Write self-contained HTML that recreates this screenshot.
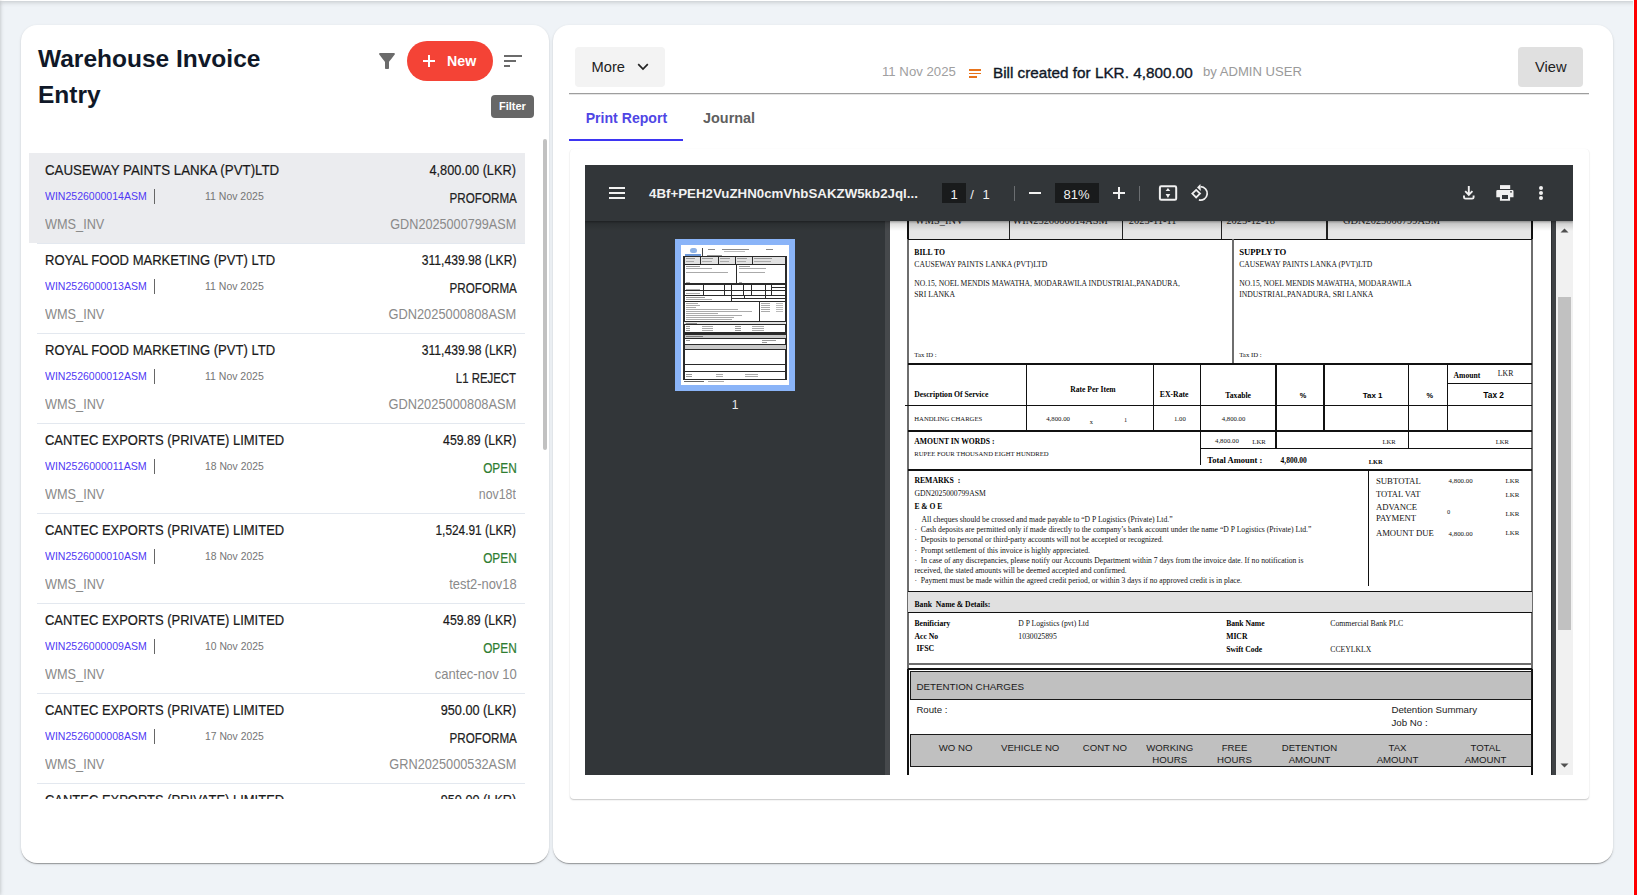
<!DOCTYPE html><html><head><meta charset="utf-8"><title>Warehouse Invoice Entry</title>
<style>
html,body{margin:0;padding:0;}
body{width:1637px;height:895px;overflow:hidden;position:relative;background:#eff3f7;font-family:'Liberation Sans',sans-serif;}
.t{position:absolute;white-space:pre;line-height:1;}
.r{position:absolute;}
.card{position:absolute;background:#fff;border-radius:16px;box-shadow:0 2px 1px -1px rgba(0,0,0,.2),0 1px 1px 0 rgba(0,0,0,.14),0 1px 3px 0 rgba(0,0,0,.12);}
.clip{position:absolute;overflow:hidden;}
svg{position:absolute;display:block;}
</style></head><body>

<div class="r" style="left:0;top:-40px;width:1637px;height:41px;background:#fff;box-shadow:0 1px 5px rgba(0,0,0,.2);"></div>
<div class="r" style="left:-40px;top:0;width:40px;height:895px;background:#fff;box-shadow:0 0 4px rgba(0,0,0,.25);"></div>
<div class="card" style="left:21px;top:25px;width:528px;height:838px;"></div>
<div class="t" style="top:47.46px;font-size:24.5px;color:#101828;font-weight:700;font-family:'Liberation Sans', sans-serif;left:38px;">Warehouse Invoice</div>
<div class="t" style="top:83.16px;font-size:24.5px;color:#101828;font-weight:700;font-family:'Liberation Sans', sans-serif;left:38px;">Entry</div>
<svg style="left:375px;top:49px" width="24" height="24" viewBox="0 0 24 24"><path d="M4.25 5.61C6.27 8.2 10 13 10 13v6c0 .55.45 1 1 1h2c.55 0 1-.45 1-1v-6s3.72-4.8 5.74-7.39c.51-.66.04-1.61-.79-1.61H5.04c-.83 0-1.3.95-.79 1.61z" fill="#6b6b6b"/></svg>
<div class="r" style="left:407px;top:41px;width:86px;height:40px;border-radius:20px;background:#f44336;"></div>
<div class="r" style="left:423px;top:60px;width:12px;height:2px;background:#fff;"></div>
<div class="r" style="left:428px;top:55px;width:2px;height:12px;background:#fff;"></div>
<div class="t" style="top:53.98px;font-size:14.2px;color:#fff;font-weight:700;font-family:'Liberation Sans', sans-serif;left:447px;">New</div>
<div class="r" style="left:504px;top:55px;width:18px;height:2px;background:#6b6b6b;"></div>
<div class="r" style="left:504px;top:60px;width:12px;height:2px;background:#6b6b6b;"></div>
<div class="r" style="left:504px;top:65px;width:6px;height:2px;background:#6b6b6b;"></div>
<div class="r" style="left:491px;top:95px;width:43px;height:23px;border-radius:4px;background:#676767;"></div>
<div class="t" style="top:101.09px;font-size:11px;color:#fff;font-weight:700;font-family:'Liberation Sans', sans-serif;left:499px;">Filter</div>
<div class="clip" style="left:0;top:0;width:1637px;height:799px;">
<div class="r" style="left:29px;top:153px;width:496px;height:90px;background:#ebecef;"></div>
<div class="r" style="left:37px;top:242.5px;width:488px;height:1px;background:#e3e8ef;"></div>
<div class="t" style="top:163.20px;font-size:14.3px;color:#1a1a1a;font-weight:400;font-family:'Liberation Sans', sans-serif;left:45.3px;-webkit-text-stroke:0.2px #1a1a1a;transform:scaleX(0.9300);transform-origin:left top;">CAUSEWAY PAINTS LANKA (PVT)LTD</div>
<div class="t" style="top:162.75px;font-size:14px;color:#1a1a1a;font-weight:400;font-family:'Liberation Sans', sans-serif;right:1120.60px;text-align:right;-webkit-text-stroke:0.2px #1a1a1a;transform:scaleX(0.9114);transform-origin:right top;">4,800.00 (LKR)</div>
<div class="t" style="top:190.77px;font-size:10.9px;color:#5038f5;font-weight:400;font-family:'Liberation Sans', sans-serif;left:45.3px;transform:scaleX(0.9653);transform-origin:left top;">WIN2526000014ASM</div>
<div class="r" style="left:154px;top:189px;width:1px;height:15px;background:#666;"></div>
<div class="t" style="top:191.11px;font-size:10.5px;color:#757575;font-weight:400;font-family:'Liberation Sans', sans-serif;left:205px;transform:scaleX(0.9991);transform-origin:left top;">11 Nov 2025</div>
<div class="t" style="top:190.75px;font-size:14px;color:#222;font-weight:400;font-family:'Liberation Sans', sans-serif;right:1120.60px;text-align:right;-webkit-text-stroke:0.2px #222;transform:scaleX(0.8332);transform-origin:right top;">PROFORMA</div>
<div class="t" style="top:216.80px;font-size:14.3px;color:#8a8a8a;font-weight:400;font-family:'Liberation Sans', sans-serif;left:45.3px;transform:scaleX(0.8895);transform-origin:left top;">WMS_INV</div>
<div class="t" style="top:216.60px;font-size:14.3px;color:#8a8a8a;font-weight:400;font-family:'Liberation Sans', sans-serif;right:1120.60px;text-align:right;transform:scaleX(0.8859);transform-origin:right top;">GDN2025000799ASM</div>
<div class="r" style="left:37px;top:332.5px;width:488px;height:1px;background:#e3e8ef;"></div>
<div class="t" style="top:253.20px;font-size:14.3px;color:#1a1a1a;font-weight:400;font-family:'Liberation Sans', sans-serif;left:45.3px;-webkit-text-stroke:0.2px #1a1a1a;transform:scaleX(0.9117);transform-origin:left top;">ROYAL FOOD MARKETING (PVT) LTD</div>
<div class="t" style="top:252.75px;font-size:14px;color:#1a1a1a;font-weight:400;font-family:'Liberation Sans', sans-serif;right:1120.60px;text-align:right;-webkit-text-stroke:0.2px #1a1a1a;transform:scaleX(0.8651);transform-origin:right top;">311,439.98 (LKR)</div>
<div class="t" style="top:280.77px;font-size:10.9px;color:#5038f5;font-weight:400;font-family:'Liberation Sans', sans-serif;left:45.3px;transform:scaleX(0.9653);transform-origin:left top;">WIN2526000013ASM</div>
<div class="r" style="left:154px;top:279px;width:1px;height:15px;background:#666;"></div>
<div class="t" style="top:281.11px;font-size:10.5px;color:#757575;font-weight:400;font-family:'Liberation Sans', sans-serif;left:205px;transform:scaleX(0.9991);transform-origin:left top;">11 Nov 2025</div>
<div class="t" style="top:280.75px;font-size:14px;color:#222;font-weight:400;font-family:'Liberation Sans', sans-serif;right:1120.60px;text-align:right;-webkit-text-stroke:0.2px #222;transform:scaleX(0.8332);transform-origin:right top;">PROFORMA</div>
<div class="t" style="top:306.80px;font-size:14.3px;color:#8a8a8a;font-weight:400;font-family:'Liberation Sans', sans-serif;left:45.3px;transform:scaleX(0.8895);transform-origin:left top;">WMS_INV</div>
<div class="t" style="top:306.60px;font-size:14.3px;color:#8a8a8a;font-weight:400;font-family:'Liberation Sans', sans-serif;right:1120.60px;text-align:right;transform:scaleX(0.8987);transform-origin:right top;">GDN2025000808ASM</div>
<div class="r" style="left:37px;top:422.5px;width:488px;height:1px;background:#e3e8ef;"></div>
<div class="t" style="top:343.20px;font-size:14.3px;color:#1a1a1a;font-weight:400;font-family:'Liberation Sans', sans-serif;left:45.3px;-webkit-text-stroke:0.2px #1a1a1a;transform:scaleX(0.9117);transform-origin:left top;">ROYAL FOOD MARKETING (PVT) LTD</div>
<div class="t" style="top:342.75px;font-size:14px;color:#1a1a1a;font-weight:400;font-family:'Liberation Sans', sans-serif;right:1120.60px;text-align:right;-webkit-text-stroke:0.2px #1a1a1a;transform:scaleX(0.8651);transform-origin:right top;">311,439.98 (LKR)</div>
<div class="t" style="top:370.77px;font-size:10.9px;color:#5038f5;font-weight:400;font-family:'Liberation Sans', sans-serif;left:45.3px;transform:scaleX(0.9653);transform-origin:left top;">WIN2526000012ASM</div>
<div class="r" style="left:154px;top:369px;width:1px;height:15px;background:#666;"></div>
<div class="t" style="top:371.11px;font-size:10.5px;color:#757575;font-weight:400;font-family:'Liberation Sans', sans-serif;left:205px;transform:scaleX(0.9991);transform-origin:left top;">11 Nov 2025</div>
<div class="t" style="top:370.75px;font-size:14px;color:#222;font-weight:400;font-family:'Liberation Sans', sans-serif;right:1120.60px;text-align:right;-webkit-text-stroke:0.2px #222;transform:scaleX(0.8124);transform-origin:right top;">L1 REJECT</div>
<div class="t" style="top:396.80px;font-size:14.3px;color:#8a8a8a;font-weight:400;font-family:'Liberation Sans', sans-serif;left:45.3px;transform:scaleX(0.8895);transform-origin:left top;">WMS_INV</div>
<div class="t" style="top:396.60px;font-size:14.3px;color:#8a8a8a;font-weight:400;font-family:'Liberation Sans', sans-serif;right:1120.60px;text-align:right;transform:scaleX(0.8987);transform-origin:right top;">GDN2025000808ASM</div>
<div class="r" style="left:37px;top:512.5px;width:488px;height:1px;background:#e3e8ef;"></div>
<div class="t" style="top:433.20px;font-size:14.3px;color:#1a1a1a;font-weight:400;font-family:'Liberation Sans', sans-serif;left:45.3px;-webkit-text-stroke:0.2px #1a1a1a;transform:scaleX(0.9068);transform-origin:left top;">CANTEC EXPORTS (PRIVATE) LIMITED</div>
<div class="t" style="top:432.75px;font-size:14px;color:#1a1a1a;font-weight:400;font-family:'Liberation Sans', sans-serif;right:1120.60px;text-align:right;-webkit-text-stroke:0.2px #1a1a1a;transform:scaleX(0.8791);transform-origin:right top;">459.89 (LKR)</div>
<div class="t" style="top:460.77px;font-size:10.9px;color:#5038f5;font-weight:400;font-family:'Liberation Sans', sans-serif;left:45.3px;transform:scaleX(0.9728);transform-origin:left top;">WIN2526000011ASM</div>
<div class="r" style="left:154px;top:459px;width:1px;height:15px;background:#666;"></div>
<div class="t" style="top:461.11px;font-size:10.5px;color:#757575;font-weight:400;font-family:'Liberation Sans', sans-serif;left:205px;transform:scaleX(0.9858);transform-origin:left top;">18 Nov 2025</div>
<div class="t" style="top:460.75px;font-size:14px;color:#2e7d32;font-weight:400;font-family:'Liberation Sans', sans-serif;right:1120.60px;text-align:right;-webkit-text-stroke:0.2px #2e7d32;transform:scaleX(0.8450);transform-origin:right top;">OPEN</div>
<div class="t" style="top:486.80px;font-size:14.3px;color:#8a8a8a;font-weight:400;font-family:'Liberation Sans', sans-serif;left:45.3px;transform:scaleX(0.8895);transform-origin:left top;">WMS_INV</div>
<div class="t" style="top:486.60px;font-size:14.3px;color:#8a8a8a;font-weight:400;font-family:'Liberation Sans', sans-serif;right:1120.60px;text-align:right;transform:scaleX(0.8644);transform-origin:right top;">nov18t</div>
<div class="r" style="left:37px;top:602.5px;width:488px;height:1px;background:#e3e8ef;"></div>
<div class="t" style="top:523.20px;font-size:14.3px;color:#1a1a1a;font-weight:400;font-family:'Liberation Sans', sans-serif;left:45.3px;-webkit-text-stroke:0.2px #1a1a1a;transform:scaleX(0.9068);transform-origin:left top;">CANTEC EXPORTS (PRIVATE) LIMITED</div>
<div class="t" style="top:522.75px;font-size:14px;color:#1a1a1a;font-weight:400;font-family:'Liberation Sans', sans-serif;right:1120.60px;text-align:right;-webkit-text-stroke:0.2px #1a1a1a;transform:scaleX(0.8474);transform-origin:right top;">1,524.91 (LKR)</div>
<div class="t" style="top:550.77px;font-size:10.9px;color:#5038f5;font-weight:400;font-family:'Liberation Sans', sans-serif;left:45.3px;transform:scaleX(0.9653);transform-origin:left top;">WIN2526000010ASM</div>
<div class="r" style="left:154px;top:549px;width:1px;height:15px;background:#666;"></div>
<div class="t" style="top:551.11px;font-size:10.5px;color:#757575;font-weight:400;font-family:'Liberation Sans', sans-serif;left:205px;transform:scaleX(0.9858);transform-origin:left top;">18 Nov 2025</div>
<div class="t" style="top:550.75px;font-size:14px;color:#2e7d32;font-weight:400;font-family:'Liberation Sans', sans-serif;right:1120.60px;text-align:right;-webkit-text-stroke:0.2px #2e7d32;transform:scaleX(0.8450);transform-origin:right top;">OPEN</div>
<div class="t" style="top:576.80px;font-size:14.3px;color:#8a8a8a;font-weight:400;font-family:'Liberation Sans', sans-serif;left:45.3px;transform:scaleX(0.8895);transform-origin:left top;">WMS_INV</div>
<div class="t" style="top:576.60px;font-size:14.3px;color:#8a8a8a;font-weight:400;font-family:'Liberation Sans', sans-serif;right:1120.60px;text-align:right;transform:scaleX(0.9046);transform-origin:right top;">test2-nov18</div>
<div class="r" style="left:37px;top:692.5px;width:488px;height:1px;background:#e3e8ef;"></div>
<div class="t" style="top:613.20px;font-size:14.3px;color:#1a1a1a;font-weight:400;font-family:'Liberation Sans', sans-serif;left:45.3px;-webkit-text-stroke:0.2px #1a1a1a;transform:scaleX(0.9068);transform-origin:left top;">CANTEC EXPORTS (PRIVATE) LIMITED</div>
<div class="t" style="top:612.75px;font-size:14px;color:#1a1a1a;font-weight:400;font-family:'Liberation Sans', sans-serif;right:1120.60px;text-align:right;-webkit-text-stroke:0.2px #1a1a1a;transform:scaleX(0.8791);transform-origin:right top;">459.89 (LKR)</div>
<div class="t" style="top:640.77px;font-size:10.9px;color:#5038f5;font-weight:400;font-family:'Liberation Sans', sans-serif;left:45.3px;transform:scaleX(0.9653);transform-origin:left top;">WIN2526000009ASM</div>
<div class="r" style="left:154px;top:639px;width:1px;height:15px;background:#666;"></div>
<div class="t" style="top:641.11px;font-size:10.5px;color:#757575;font-weight:400;font-family:'Liberation Sans', sans-serif;left:205px;transform:scaleX(0.9858);transform-origin:left top;">10 Nov 2025</div>
<div class="t" style="top:640.75px;font-size:14px;color:#2e7d32;font-weight:400;font-family:'Liberation Sans', sans-serif;right:1120.60px;text-align:right;-webkit-text-stroke:0.2px #2e7d32;transform:scaleX(0.8450);transform-origin:right top;">OPEN</div>
<div class="t" style="top:666.80px;font-size:14.3px;color:#8a8a8a;font-weight:400;font-family:'Liberation Sans', sans-serif;left:45.3px;transform:scaleX(0.8895);transform-origin:left top;">WMS_INV</div>
<div class="t" style="top:666.60px;font-size:14.3px;color:#8a8a8a;font-weight:400;font-family:'Liberation Sans', sans-serif;right:1120.60px;text-align:right;transform:scaleX(0.9128);transform-origin:right top;">cantec-nov 10</div>
<div class="r" style="left:37px;top:782.5px;width:488px;height:1px;background:#e3e8ef;"></div>
<div class="t" style="top:703.20px;font-size:14.3px;color:#1a1a1a;font-weight:400;font-family:'Liberation Sans', sans-serif;left:45.3px;-webkit-text-stroke:0.2px #1a1a1a;transform:scaleX(0.9068);transform-origin:left top;">CANTEC EXPORTS (PRIVATE) LIMITED</div>
<div class="t" style="top:702.75px;font-size:14px;color:#1a1a1a;font-weight:400;font-family:'Liberation Sans', sans-serif;right:1120.60px;text-align:right;-webkit-text-stroke:0.2px #1a1a1a;transform:scaleX(0.9077);transform-origin:right top;">950.00 (LKR)</div>
<div class="t" style="top:730.77px;font-size:10.9px;color:#5038f5;font-weight:400;font-family:'Liberation Sans', sans-serif;left:45.3px;transform:scaleX(0.9653);transform-origin:left top;">WIN2526000008ASM</div>
<div class="r" style="left:154px;top:729px;width:1px;height:15px;background:#666;"></div>
<div class="t" style="top:731.11px;font-size:10.5px;color:#757575;font-weight:400;font-family:'Liberation Sans', sans-serif;left:205px;transform:scaleX(0.9858);transform-origin:left top;">17 Nov 2025</div>
<div class="t" style="top:730.75px;font-size:14px;color:#222;font-weight:400;font-family:'Liberation Sans', sans-serif;right:1120.60px;text-align:right;-webkit-text-stroke:0.2px #222;transform:scaleX(0.8332);transform-origin:right top;">PROFORMA</div>
<div class="t" style="top:756.80px;font-size:14.3px;color:#8a8a8a;font-weight:400;font-family:'Liberation Sans', sans-serif;left:45.3px;transform:scaleX(0.8895);transform-origin:left top;">WMS_INV</div>
<div class="t" style="top:756.60px;font-size:14.3px;color:#8a8a8a;font-weight:400;font-family:'Liberation Sans', sans-serif;right:1120.60px;text-align:right;transform:scaleX(0.8923);transform-origin:right top;">GRN2025000532ASM</div>
<div class="r" style="left:37px;top:872.5px;width:488px;height:1px;background:#e3e8ef;"></div>
<div class="t" style="top:793.20px;font-size:14.3px;color:#1a1a1a;font-weight:400;font-family:'Liberation Sans', sans-serif;left:45.3px;-webkit-text-stroke:0.2px #1a1a1a;transform:scaleX(0.9068);transform-origin:left top;">CANTEC EXPORTS (PRIVATE) LIMITED</div>
<div class="t" style="top:792.75px;font-size:14px;color:#1a1a1a;font-weight:400;font-family:'Liberation Sans', sans-serif;right:1120.60px;text-align:right;-webkit-text-stroke:0.2px #1a1a1a;transform:scaleX(0.9077);transform-origin:right top;">950.00 (LKR)</div>
<div class="t" style="top:820.77px;font-size:10.9px;color:#5038f5;font-weight:400;font-family:'Liberation Sans', sans-serif;left:45.3px;transform:scaleX(0.9653);transform-origin:left top;">WIN2526000007ASM</div>
<div class="r" style="left:154px;top:819px;width:1px;height:15px;background:#666;"></div>
<div class="t" style="top:821.11px;font-size:10.5px;color:#757575;font-weight:400;font-family:'Liberation Sans', sans-serif;left:205px;transform:scaleX(0.9858);transform-origin:left top;">17 Nov 2025</div>
<div class="t" style="top:820.75px;font-size:14px;color:#222;font-weight:400;font-family:'Liberation Sans', sans-serif;right:1120.60px;text-align:right;-webkit-text-stroke:0.2px #222;transform:scaleX(0.8332);transform-origin:right top;">PROFORMA</div>
<div class="t" style="top:846.80px;font-size:14.3px;color:#8a8a8a;font-weight:400;font-family:'Liberation Sans', sans-serif;left:45.3px;transform:scaleX(0.8895);transform-origin:left top;">WMS_INV</div>
<div class="t" style="top:846.60px;font-size:14.3px;color:#8a8a8a;font-weight:400;font-family:'Liberation Sans', sans-serif;right:1120.60px;text-align:right;transform:scaleX(0.8923);transform-origin:right top;">GRN2025000532ASM</div>
</div>
<div class="r" style="left:543px;top:139px;width:4px;height:311px;border-radius:2px;background:#c1c1c1;"></div>
<div class="card" style="left:553px;top:25px;width:1060px;height:838px;"></div>
<div class="r" style="left:575px;top:47px;width:90px;height:40px;border-radius:4px;background:#f3f3f3;"></div>
<div class="t" style="top:59.86px;font-size:14.7px;color:#222;font-weight:400;font-family:'Liberation Sans', sans-serif;left:591.5px;">More</div>
<svg style="left:637px;top:63px" width="12" height="8" viewBox="0 0 12 8"><path d="M1.2 1.2L6 6L10.8 1.2" fill="none" stroke="#222" stroke-width="1.7"/></svg>
<div class="t" style="top:64.83px;font-size:13.2px;color:#a0a0a0;font-weight:400;font-family:'Liberation Sans', sans-serif;left:882px;">11 Nov 2025</div>
<div class="r" style="left:969px;top:69px;width:12px;height:1.6px;background:#e8741c;"></div>
<div class="r" style="left:969px;top:72.5px;width:12px;height:1.6px;background:#e8741c;"></div>
<div class="r" style="left:969px;top:76px;width:8px;height:1.6px;background:#e8741c;"></div>
<div class="t" style="top:66.10px;font-size:14.3px;color:#101828;font-weight:400;font-family:'Liberation Sans', sans-serif;left:993.4px;-webkit-text-stroke:0.35px #101828;transform:scaleX(1.0689);transform-origin:left top;">Bill created for LKR. 4,800.00</div>
<div class="t" style="top:64.91px;font-size:13.1px;color:#9a9a9a;font-weight:400;font-family:'Liberation Sans', sans-serif;left:1203px;">by ADMIN USER</div>
<div class="r" style="left:1518px;top:47px;width:65px;height:40px;border-radius:4px;background:#e0e0e0;"></div>
<div class="t" style="top:59.86px;font-size:14.7px;color:#222;font-weight:400;font-family:'Liberation Sans', sans-serif;left:1535px;">View</div>
<div class="r" style="left:569px;top:93px;width:1020px;height:1px;background:#9e9e9e;"></div>
<div class="r" style="left:569px;top:94px;width:1020px;height:1px;background:#e6e6e6;"></div>
<div class="t" style="top:110.86px;font-size:14.1px;color:#4f46e5;font-weight:700;font-family:'Liberation Sans', sans-serif;left:585.7px;">Print Report</div>
<div class="t" style="top:110.56px;font-size:14.1px;color:#5f5f5f;font-weight:700;font-family:'Liberation Sans', sans-serif;left:703px;transform:scaleX(1.0235);transform-origin:left top;">Journal</div>
<div class="r" style="left:569px;top:139px;width:114px;height:2px;background:#3d35f2;"></div>
<div class="r" style="left:569.5px;top:148.5px;width:1019px;height:650px;background:#fff;border-radius:4px;box-shadow:0 1px 1.5px rgba(0,0,0,.22),0 0 1px rgba(0,0,0,.05);"></div>
<div class="clip" style="left:585px;top:165px;width:988px;height:610px;background:#323639;">
<div class="r" style="left:300px;top:56px;width:5px;height:554px;background:#46494c;"></div>
<div class="r" style="left:305px;top:56px;width:661px;height:554px;background:#fff;"></div>
<div class="r" style="left:966px;top:56px;width:5px;height:554px;background:#3f4245;"></div>
<div class="r" style="left:966px;top:56px;width:1px;height:554px;background:#2b2e31;"></div>
<div class="r" style="left:971px;top:56px;width:17px;height:554px;background:#f1f1f1;"></div>
<div class="r" style="left:973px;top:132px;width:13px;height:333px;background:#c1c1c1;"></div>
<svg style="left:975px;top:62px" width="9" height="6" viewBox="0 0 9 6"><path d="M0.5 5.5L4.5 1.5L8.5 5.5Z" fill="#505050"/></svg>
<svg style="left:975px;top:598px" width="9" height="6" viewBox="0 0 9 6"><path d="M0.5 0.5L4.5 4.5L8.5 0.5Z" fill="#505050"/></svg>
<div class="r" style="left:323px;top:56px;width:624px;height:18px;background:#e6e6e6;"></div>
<div class="t" style="top:51.29px;font-size:10.4px;color:#222;font-weight:400;font-family:'Liberation Serif', serif;left:330px;">WMS_INV</div>
<div class="t" style="top:51.29px;font-size:10.4px;color:#222;font-weight:400;font-family:'Liberation Serif', serif;left:427.5px;">WIN2526000014ASM</div>
<div class="t" style="top:51.29px;font-size:10.4px;color:#222;font-weight:400;font-family:'Liberation Serif', serif;left:543.8px;">2025-11-11</div>
<div class="t" style="top:51.29px;font-size:10.4px;color:#222;font-weight:400;font-family:'Liberation Serif', serif;left:641.4000000000001px;">2025-12-18</div>
<div class="t" style="top:51.29px;font-size:10.4px;color:#222;font-weight:400;font-family:'Liberation Serif', serif;left:758px;">GDN2025000799ASM</div>
<div class="r" style="left:423.7px;top:56px;width:1.6px;height:18px;background:#222;"></div>
<div class="r" style="left:536.5px;top:56px;width:1.6px;height:18px;background:#222;"></div>
<div class="r" style="left:635.7px;top:56px;width:1.6px;height:18px;background:#222;"></div>
<div class="r" style="left:741.2px;top:56px;width:1.6px;height:18px;background:#222;"></div>
<div class="r" style="left:322.1px;top:56px;width:1.8px;height:554px;background:#6e6e6e;"></div>
<div class="r" style="left:946.1px;top:56px;width:1.8px;height:554px;background:#6e6e6e;"></div>
<div class="r" style="left:323px;top:73.6px;width:624px;height:1.8px;background:#111;"></div>
<div class="r" style="left:322.1px;top:56px;width:1.8px;height:18px;background:#111;"></div>
<div class="r" style="left:946.1px;top:56px;width:1.8px;height:18px;background:#111;"></div>
<div class="r" style="left:647.2px;top:74px;width:1.6px;height:123.5px;background:#6e6e6e;"></div>
<div class="t" style="top:83.57px;font-size:7.68px;color:#000;font-weight:700;font-family:'Liberation Serif', serif;left:329.29999999999995px;">BILL TO</div>
<div class="t" style="top:96.40px;font-size:7.64px;color:#111;font-weight:400;font-family:'Liberation Serif', serif;left:329.29999999999995px;">CAUSEWAY PAINTS LANKA (PVT)LTD</div>
<div class="t" style="top:115.31px;font-size:7.63px;color:#111;font-weight:400;font-family:'Liberation Serif', serif;left:329.29999999999995px;">NO.15, NOEL MENDIS MAWATHA, MODARAWILA INDUSTRIAL,PANADURA,</div>
<div class="t" style="top:126.05px;font-size:7.7px;color:#111;font-weight:400;font-family:'Liberation Serif', serif;left:329.29999999999995px;">SRI LANKA</div>
<div class="t" style="top:187.15px;font-size:6.75px;color:#111;font-weight:400;font-family:'Liberation Serif', serif;left:329.29999999999995px;">Tax ID :</div>
<div class="t" style="top:83.41px;font-size:8.7px;color:#000;font-weight:700;font-family:'Liberation Serif', serif;left:654.2px;">SUPPLY TO</div>
<div class="t" style="top:95.90px;font-size:7.64px;color:#111;font-weight:400;font-family:'Liberation Serif', serif;left:654.2px;">CAUSEWAY PAINTS LANKA (PVT)LTD</div>
<div class="t" style="top:114.92px;font-size:7.62px;color:#111;font-weight:400;font-family:'Liberation Serif', serif;left:654.2px;">NO.15, NOEL MENDIS MAWATHA, MODARAWILA</div>
<div class="t" style="top:125.88px;font-size:7.66px;color:#111;font-weight:400;font-family:'Liberation Serif', serif;left:654.2px;">INDUSTRIAL,PANADURA, SRI LANKA</div>
<div class="t" style="top:187.10px;font-size:6.81px;color:#111;font-weight:400;font-family:'Liberation Serif', serif;left:654.2px;">Tax ID :</div>
<div class="r" style="left:323px;top:198.4px;width:624px;height:1.6px;background:#111;"></div>
<div class="r" style="left:320px;top:239.7px;width:627px;height:1.6px;background:#111;"></div>
<div class="r" style="left:323px;top:265.2px;width:624px;height:1.6px;background:#111;"></div>
<div class="r" style="left:615.5px;top:282.8px;width:331.5px;height:1.6px;background:#111;"></div>
<div class="r" style="left:323px;top:304.4px;width:624px;height:1.6px;background:#111;"></div>
<div class="r" style="left:862.5px;top:217.5px;width:84.5px;height:1.4px;background:#111;"></div>
<div class="r" style="left:440.85px;top:199px;width:1.5px;height:67px;background:#111;"></div>
<div class="r" style="left:567.65px;top:199px;width:1.5px;height:67px;background:#111;"></div>
<div class="r" style="left:738.25px;top:199px;width:1.5px;height:67px;background:#111;"></div>
<div class="r" style="left:861.65px;top:199px;width:1.5px;height:67px;background:#111;"></div>
<div class="r" style="left:614.65px;top:199px;width:1.5px;height:101px;background:#111;"></div>
<div class="r" style="left:690.25px;top:199px;width:1.5px;height:84.6px;background:#111;"></div>
<div class="r" style="left:822.75px;top:199px;width:1.5px;height:84.6px;background:#111;"></div>
<div class="t" style="top:226.08px;font-size:7.66px;color:#000;font-weight:700;font-family:'Liberation Serif', serif;left:329.29999999999995px;">Description Of Service</div>
<div class="t" style="top:221.15px;font-size:7.58px;color:#000;font-weight:700;font-family:'Liberation Serif', serif;left:485.29999999999995px;">Rate Per Item</div>
<div class="t" style="top:226.03px;font-size:7.73px;color:#000;font-weight:700;font-family:'Liberation Serif', serif;left:574.8px;">EX-Rate</div>
<div class="t" style="top:226.87px;font-size:7.68px;color:#000;font-weight:700;font-family:'Liberation Serif', serif;left:640.3px;">Taxable</div>
<div class="t" style="top:227.04px;font-size:7.4px;color:#000;font-weight:700;font-family:'Liberation Sans', sans-serif;left:714.7px;">%</div>
<div class="t" style="top:226.55px;font-size:7.97px;color:#000;font-weight:700;font-family:'Liberation Sans', sans-serif;left:777.7px;">Tax 1</div>
<div class="t" style="top:227.04px;font-size:7.4px;color:#000;font-weight:700;font-family:'Liberation Sans', sans-serif;left:841.5999999999999px;">%</div>
<div class="t" style="top:226.25px;font-size:8.33px;color:#000;font-weight:700;font-family:'Liberation Sans', sans-serif;left:898.3px;">Tax 2</div>
<div class="t" style="top:206.51px;font-size:7.63px;color:#000;font-weight:700;font-family:'Liberation Serif', serif;left:868.5999999999999px;">Amount</div>
<div class="t" style="top:205.49px;font-size:7.77px;color:#111;font-weight:400;font-family:'Liberation Serif', serif;left:912.8px;">LKR</div>
<div class="t" style="top:251.42px;font-size:6.66px;color:#111;font-weight:400;font-family:'Liberation Serif', serif;left:329.29999999999995px;">HANDLING CHARGES</div>
<div class="t" style="top:251.31px;font-size:6.79px;color:#111;font-weight:400;font-family:'Liberation Serif', serif;left:461.20000000000005px;">4,800.00</div>
<div class="t" style="top:253.64px;font-size:6.4px;color:#111;font-weight:400;font-family:'Liberation Serif', serif;left:504.79999999999995px;">x</div>
<div class="t" style="top:252.14px;font-size:6.4px;color:#111;font-weight:400;font-family:'Liberation Serif', serif;left:539px;">1</div>
<div class="t" style="top:251.38px;font-size:6.71px;color:#111;font-weight:400;font-family:'Liberation Serif', serif;left:589px;">1.00</div>
<div class="t" style="top:251.18px;font-size:6.71px;color:#111;font-weight:400;font-family:'Liberation Serif', serif;left:636.8px;">4,800.00</div>
<div class="t" style="top:272.79px;font-size:7.65px;color:#000;font-weight:700;font-family:'Liberation Serif', serif;left:329.29999999999995px;">AMOUNT IN WORDS :</div>
<div class="t" style="top:285.72px;font-size:6.66px;color:#111;font-weight:400;font-family:'Liberation Serif', serif;left:329.29999999999995px;">RUPEE FOUR THOUSAND EIGHT HUNDRED</div>
<div class="t" style="top:273.49px;font-size:6.82px;color:#111;font-weight:400;font-family:'Liberation Serif', serif;left:630px;">4,800.00</div>
<div class="t" style="top:273.54px;font-size:6.76px;color:#111;font-weight:400;font-family:'Liberation Serif', serif;left:667.3px;">LKR</div>
<div class="t" style="top:273.66px;font-size:6.61px;color:#111;font-weight:400;font-family:'Liberation Serif', serif;left:797.4000000000001px;">LKR</div>
<div class="t" style="top:273.71px;font-size:6.56px;color:#111;font-weight:400;font-family:'Liberation Serif', serif;left:910.8px;">LKR</div>
<div class="t" style="top:291.38px;font-size:8.5px;color:#000;font-weight:700;font-family:'Liberation Serif', serif;left:622.3px;">Total Amount :</div>
<div class="t" style="top:291.69px;font-size:7.54px;color:#000;font-weight:700;font-family:'Liberation Serif', serif;left:695.5px;">4,800.00</div>
<div class="t" style="top:293.65px;font-size:6.39px;color:#000;font-weight:700;font-family:'Liberation Serif', serif;left:783.8px;">LKR</div>
<div class="r" style="left:782.85px;top:306px;width:1.5px;height:115px;background:#111;"></div>
<div class="t" style="top:311.93px;font-size:7.72px;color:#000;font-weight:700;font-family:'Liberation Serif', serif;left:329.4px;">REMARKS  :</div>
<div class="t" style="top:324.79px;font-size:7.65px;color:#111;font-weight:400;font-family:'Liberation Serif', serif;left:329.4px;">GDN2025000799ASM</div>
<div class="t" style="top:338.04px;font-size:7.59px;color:#000;font-weight:700;font-family:'Liberation Serif', serif;left:329.4px;">E &amp; O E</div>
<div class="t" style="top:351.08px;font-size:7.66px;color:#111;font-weight:400;font-family:'Liberation Serif', serif;left:336.5px;">All cheques should be crossed and made payable to “D P Logistics (Private) Ltd.”</div>
<div class="t" style="top:361.07px;font-size:7.68px;color:#111;font-weight:400;font-family:'Liberation Serif', serif;left:329.4px;">·  Cash deposits are permitted only if made directly to the company’s bank account under the name “D P Logistics (Private) Ltd.”</div>
<div class="t" style="top:371.09px;font-size:7.65px;color:#111;font-weight:400;font-family:'Liberation Serif', serif;left:329.4px;">·  Deposits to personal or third-party accounts will not be accepted or recognized.</div>
<div class="t" style="top:382.08px;font-size:7.67px;color:#111;font-weight:400;font-family:'Liberation Serif', serif;left:329.4px;">·  Prompt settlement of this invoice is highly appreciated.</div>
<div class="t" style="top:392.08px;font-size:7.66px;color:#111;font-weight:400;font-family:'Liberation Serif', serif;left:329.4px;">·  In case of any discrepancies, please notify our Accounts Department within 7 days from the invoice date. If no notification is</div>
<div class="t" style="top:401.78px;font-size:7.66px;color:#111;font-weight:400;font-family:'Liberation Serif', serif;left:329.4px;">received, the stated amounts will be deemed accepted and confirmed.</div>
<div class="t" style="top:411.78px;font-size:7.66px;color:#111;font-weight:400;font-family:'Liberation Serif', serif;left:329.4px;">·  Payment must be made within the agreed credit period, or within 3 days if no approved credit is in place.</div>
<div class="t" style="top:312.05px;font-size:8.78px;color:#111;font-weight:400;font-family:'Liberation Serif', serif;left:790.9000000000001px;">SUBTOTAL</div>
<div class="t" style="top:325.31px;font-size:8.58px;color:#111;font-weight:400;font-family:'Liberation Serif', serif;left:790.9000000000001px;">TOTAL VAT</div>
<div class="t" style="top:338.22px;font-size:8.69px;color:#111;font-weight:400;font-family:'Liberation Serif', serif;left:790.9000000000001px;">ADVANCE</div>
<div class="t" style="top:349.25px;font-size:8.66px;color:#111;font-weight:400;font-family:'Liberation Serif', serif;left:790.9000000000001px;">PAYMENT</div>
<div class="t" style="top:364.25px;font-size:8.66px;color:#111;font-weight:400;font-family:'Liberation Serif', serif;left:790.9000000000001px;">AMOUNT DUE</div>
<div class="t" style="top:313.26px;font-size:6.85px;color:#111;font-weight:400;font-family:'Liberation Serif', serif;left:863.5999999999999px;">4,800.00</div>
<div class="t" style="top:343.74px;font-size:6.4px;color:#111;font-weight:400;font-family:'Liberation Serif', serif;left:862px;">0</div>
<div class="t" style="top:366.26px;font-size:6.85px;color:#111;font-weight:400;font-family:'Liberation Serif', serif;left:863.5999999999999px;">4,800.00</div>
<div class="t" style="top:313.25px;font-size:6.86px;color:#111;font-weight:400;font-family:'Liberation Serif', serif;left:920.5px;">LKR</div>
<div class="t" style="top:326.75px;font-size:6.86px;color:#111;font-weight:400;font-family:'Liberation Serif', serif;left:920.5px;">LKR</div>
<div class="t" style="top:345.75px;font-size:6.86px;color:#111;font-weight:400;font-family:'Liberation Serif', serif;left:920.5px;">LKR</div>
<div class="t" style="top:365.25px;font-size:6.86px;color:#111;font-weight:400;font-family:'Liberation Serif', serif;left:920.5px;">LKR</div>
<div class="r" style="left:323px;top:426.5px;width:624px;height:21px;background:#e0e0e0;"></div>
<div class="r" style="left:323px;top:425.7px;width:624px;height:1.8px;background:#111;"></div>
<div class="r" style="left:323px;top:446.6px;width:624px;height:1.8px;background:#111;"></div>
<div class="t" style="top:435.88px;font-size:7.67px;color:#000;font-weight:700;font-family:'Liberation Serif', serif;left:329.5px;">Bank  Name &amp; Details:</div>
<div class="t" style="top:454.72px;font-size:7.62px;color:#000;font-weight:700;font-family:'Liberation Serif', serif;left:329.5px;">Benificiary</div>
<div class="t" style="top:467.85px;font-size:7.7px;color:#000;font-weight:700;font-family:'Liberation Serif', serif;left:329.5px;">Acc No</div>
<div class="t" style="top:480.46px;font-size:7.81px;color:#000;font-weight:700;font-family:'Liberation Serif', serif;left:331.4px;">IFSC</div>
<div class="t" style="top:454.71px;font-size:7.63px;color:#111;font-weight:400;font-family:'Liberation Serif', serif;left:433.29999999999995px;">D P Logistics (pvt) Ltd</div>
<div class="t" style="top:467.86px;font-size:7.69px;color:#111;font-weight:400;font-family:'Liberation Serif', serif;left:433.29999999999995px;">1030025895</div>
<div class="t" style="top:454.69px;font-size:7.65px;color:#000;font-weight:700;font-family:'Liberation Serif', serif;left:641.2px;">Bank Name</div>
<div class="t" style="top:467.89px;font-size:7.65px;color:#000;font-weight:700;font-family:'Liberation Serif', serif;left:641.2px;">MICR</div>
<div class="t" style="top:480.57px;font-size:7.68px;color:#000;font-weight:700;font-family:'Liberation Serif', serif;left:641.2px;">Swift Code</div>
<div class="t" style="top:454.61px;font-size:7.75px;color:#111;font-weight:400;font-family:'Liberation Serif', serif;left:745.3px;">Commercial Bank PLC</div>
<div class="t" style="top:480.56px;font-size:7.69px;color:#111;font-weight:400;font-family:'Liberation Serif', serif;left:745.3px;">CCEYLKLX</div>
<div class="r" style="left:323px;top:498.3px;width:624px;height:1.8px;background:#6e6e6e;"></div>
<div class="r" style="left:323px;top:503.1px;width:624px;height:1.8px;background:#111;"></div>
<div class="r" style="left:322.1px;top:504px;width:1.8px;height:106px;background:#111;"></div>
<div class="r" style="left:946.1px;top:504px;width:1.8px;height:106px;background:#111;"></div>
<div class="r" style="left:325px;top:505.5px;width:621.5px;height:29.5px;background:#c0c0c0;box-sizing:border-box;border:1.5px solid #1a1a1a;"></div>
<div class="t" style="top:516.81px;font-size:9.79px;color:#1a1a1a;font-weight:400;font-family:'Liberation Sans', sans-serif;left:331.4px;">DETENTION CHARGES</div>
<div class="t" style="top:540.03px;font-size:9.65px;color:#1a1a1a;font-weight:400;font-family:'Liberation Sans', sans-serif;left:331.4px;">Route :</div>
<div class="t" style="top:540.29px;font-size:9.7px;color:#1a1a1a;font-weight:400;font-family:'Liberation Sans', sans-serif;left:806.4000000000001px;">Detention Summary</div>
<div class="t" style="top:553.26px;font-size:9.73px;color:#1a1a1a;font-weight:400;font-family:'Liberation Sans', sans-serif;left:806.4000000000001px;">Job No :</div>
<div class="r" style="left:325px;top:569.3px;width:621.5px;height:32.5px;background:#c0c0c0;box-sizing:border-box;border:1.8px solid #1a1a1a;"></div>
<div class="t" style="top:577.93px;font-size:9.65px;color:#1a1a1a;font-weight:400;font-family:'Liberation Sans', sans-serif;left:70.60px;width:600px;text-align:center;">WO NO</div>
<div class="t" style="top:577.93px;font-size:9.65px;color:#1a1a1a;font-weight:400;font-family:'Liberation Sans', sans-serif;left:145.20px;width:600px;text-align:center;">VEHICLE NO</div>
<div class="t" style="top:577.93px;font-size:9.65px;color:#1a1a1a;font-weight:400;font-family:'Liberation Sans', sans-serif;left:219.80px;width:600px;text-align:center;">CONT NO</div>
<div class="t" style="top:577.93px;font-size:9.65px;color:#1a1a1a;font-weight:400;font-family:'Liberation Sans', sans-serif;left:284.70px;width:600px;text-align:center;">WORKING</div>
<div class="t" style="top:589.83px;font-size:9.65px;color:#1a1a1a;font-weight:400;font-family:'Liberation Sans', sans-serif;left:284.70px;width:600px;text-align:center;">HOURS</div>
<div class="t" style="top:577.93px;font-size:9.65px;color:#1a1a1a;font-weight:400;font-family:'Liberation Sans', sans-serif;left:349.50px;width:600px;text-align:center;">FREE</div>
<div class="t" style="top:589.83px;font-size:9.65px;color:#1a1a1a;font-weight:400;font-family:'Liberation Sans', sans-serif;left:349.50px;width:600px;text-align:center;">HOURS</div>
<div class="t" style="top:577.93px;font-size:9.65px;color:#1a1a1a;font-weight:400;font-family:'Liberation Sans', sans-serif;left:424.50px;width:600px;text-align:center;">DETENTION</div>
<div class="t" style="top:589.83px;font-size:9.65px;color:#1a1a1a;font-weight:400;font-family:'Liberation Sans', sans-serif;left:424.50px;width:600px;text-align:center;">AMOUNT</div>
<div class="t" style="top:577.93px;font-size:9.65px;color:#1a1a1a;font-weight:400;font-family:'Liberation Sans', sans-serif;left:512.50px;width:600px;text-align:center;">TAX</div>
<div class="t" style="top:589.83px;font-size:9.65px;color:#1a1a1a;font-weight:400;font-family:'Liberation Sans', sans-serif;left:512.50px;width:600px;text-align:center;">AMOUNT</div>
<div class="t" style="top:577.93px;font-size:9.65px;color:#1a1a1a;font-weight:400;font-family:'Liberation Sans', sans-serif;left:600.50px;width:600px;text-align:center;">TOTAL</div>
<div class="t" style="top:589.83px;font-size:9.65px;color:#1a1a1a;font-weight:400;font-family:'Liberation Sans', sans-serif;left:600.50px;width:600px;text-align:center;">AMOUNT</div>
<div class="r" style="left:0px;top:56px;width:988px;height:10px;background:linear-gradient(rgba(0,0,0,.18),rgba(0,0,0,0));"></div>
<div class="r" style="left:0px;top:0px;width:988px;height:56px;background:#323639;box-shadow:0 1px 2px rgba(0,0,0,.3);"></div>
<div class="r" style="left:24px;top:22px;width:16px;height:2px;background:#f1f1f1;"></div>
<div class="r" style="left:24px;top:27px;width:16px;height:2px;background:#f1f1f1;"></div>
<div class="r" style="left:24px;top:32px;width:16px;height:2px;background:#f1f1f1;"></div>
<div class="t" style="top:21.84px;font-size:13.3px;color:#f1f1f1;font-weight:700;font-family:'Liberation Sans', sans-serif;left:64px;">4Bf+PEH2VuZHN0cmVhbSAKZW5kb2Jql...</div>
<div class="r" style="left:357px;top:18px;width:24px;height:20px;background:#191b1c;"></div>
<div class="t" style="top:22.80px;font-size:13px;color:#f1f1f1;font-weight:400;font-family:'Liberation Sans', sans-serif;left:69.00px;width:600px;text-align:center;">1</div>
<div class="t" style="top:22.80px;font-size:13px;color:#f1f1f1;font-weight:400;font-family:'Liberation Sans', sans-serif;left:87.00px;width:600px;text-align:center;">/</div>
<div class="t" style="top:22.80px;font-size:13px;color:#f1f1f1;font-weight:400;font-family:'Liberation Sans', sans-serif;left:101.00px;width:600px;text-align:center;">1</div>
<div class="r" style="left:429px;top:21px;width:1px;height:15px;background:#6b6e71;"></div>
<div class="r" style="left:444px;top:27px;width:12px;height:2px;background:#f1f1f1;"></div>
<div class="r" style="left:470px;top:18px;width:44px;height:20px;background:#191b1c;"></div>
<div class="t" style="top:22.80px;font-size:13px;color:#f1f1f1;font-weight:400;font-family:'Liberation Sans', sans-serif;left:191.50px;width:600px;text-align:center;">81%</div>
<div class="r" style="left:528px;top:27px;width:12px;height:2px;background:#f1f1f1;"></div>
<div class="r" style="left:533px;top:22px;width:2px;height:12px;background:#f1f1f1;"></div>
<div class="r" style="left:554px;top:21px;width:1px;height:15px;background:#6b6e71;"></div>
<svg style="left:572px;top:19px" width="22" height="18" viewBox="0 0 22 18"><rect x="2.9" y="2.35" width="16.3" height="13.45" rx="1.3" fill="none" stroke="#f1f1f1" stroke-width="2"/><path d="M10.95 3.9L13.3 7.1H8.6Z M10.95 13.9L13.3 10.1H8.6Z" fill="#f1f1f1"/></svg>
<svg style="left:603px;top:17px" width="24" height="22" viewBox="0 0 24 22"><path d="M4.3 11.6L8.15 7.9L12 11.6L8.15 15.4Z" fill="none" stroke="#f1f1f1" stroke-width="1.8"/><path d="M12.6 4.7A6.7 6.7 0 1 1 10.9 17.9" fill="none" stroke="#f1f1f1" stroke-width="1.8"/><path d="M12.4 1.9L9.0 5.4L12.8 8.9Z" fill="#f1f1f1"/></svg>
<svg style="left:875px;top:19px" width="18" height="18" viewBox="0 0 18 18"><path d="M8.8 2V10.8M5.2 7.2L8.8 10.8L12.4 7.2" fill="none" stroke="#f1f1f1" stroke-width="1.9"/><path d="M4 11.6V13.2Q4 14.6 5.4 14.6H12.2Q13.6 14.6 13.6 13.2V11.6" fill="none" stroke="#f1f1f1" stroke-width="1.9"/></svg>
<svg style="left:909px;top:18px" width="22" height="20" viewBox="0 0 22 20"><path d="M6 2.1H16.2V6H6Z" fill="#f1f1f1"/><path d="M4 7H18.2Q19.5 7 19.5 8.3V14.2H16.1V17.7H5.9V14.2H2.3V8.3Q2.3 7 3.6 7Z" fill="#f1f1f1"/><path d="M8 12H14V16H8Z" fill="#323639"/><circle cx="17" cy="8.8" r="0.9" fill="#323639"/></svg>
<div class="r" style="left:954px;top:21.30000000000001px;width:4px;height:4px;border-radius:2px;background:#f1f1f1;"></div>
<div class="r" style="left:954px;top:26.099999999999994px;width:4px;height:4px;border-radius:2px;background:#f1f1f1;"></div>
<div class="r" style="left:954px;top:30.900000000000006px;width:4px;height:4px;border-radius:2px;background:#f1f1f1;"></div>
<div class="r" style="left:90px;top:74px;width:120px;height:152px;background:#8ab4f8;"></div>
<div class="r" style="left:96px;top:80px;width:108px;height:140px;background:#fff;"></div>
<div class="t" style="top:233.84px;font-size:12px;color:#e8eaed;font-weight:400;font-family:'Liberation Sans', sans-serif;left:-150.00px;width:600px;text-align:center;">1</div>
<div class="r" style="left:105px;top:83px;width:7px;height:5px;background:#8fb3e6;border-radius:3px;"></div>
<div class="r" style="left:100px;top:89px;width:16px;height:1.6px;background:#6d98d8;"></div>
<div class="r" style="left:116.74px;top:83px;width:0.9199999999999999px;height:7.5px;background:#444;"></div>
<div class="r" style="left:123px;top:84px;width:7px;height:0.8px;background:#888;"></div>
<div class="r" style="left:136.5px;top:84px;width:27.5px;height:0.8px;background:#888;"></div>
<div class="r" style="left:139px;top:86px;width:21px;height:0.5px;background:#bbb;"></div>
<div class="r" style="left:181.4px;top:84px;width:6.3px;height:0.8px;background:#888;"></div>
<div class="r" style="left:122px;top:90px;width:15px;height:0.6px;background:#999;"></div>
<div class="r" style="left:99px;top:91px;width:102px;height:8.3px;background:#e2e2e2;"></div>
<div class="r" style="left:99px;top:90.68px;width:102px;height:1.035px;background:#2a2a2a;"></div>
<div class="r" style="left:99px;top:98.73px;width:102px;height:1.15px;background:#2a2a2a;"></div>
<div class="r" style="left:114.64px;top:91px;width:0.9199999999999999px;height:8.3px;background:#2a2a2a;"></div>
<div class="r" style="left:133.14px;top:91px;width:0.9199999999999999px;height:8.3px;background:#2a2a2a;"></div>
<div class="r" style="left:149.74px;top:91px;width:0.9199999999999999px;height:8.3px;background:#2a2a2a;"></div>
<div class="r" style="left:166.84px;top:91px;width:0.9199999999999999px;height:8.3px;background:#2a2a2a;"></div>
<div class="r" style="left:100.5px;top:93.3px;width:9.5px;height:0.5px;background:#999;"></div>
<div class="r" style="left:100.5px;top:96px;width:8.5px;height:0.5px;background:#aaa;"></div>
<div class="r" style="left:116.5px;top:93.3px;width:11.5px;height:0.5px;background:#999;"></div>
<div class="r" style="left:116.5px;top:96px;width:10.5px;height:0.5px;background:#aaa;"></div>
<div class="r" style="left:134.5px;top:93.3px;width:10.5px;height:0.5px;background:#999;"></div>
<div class="r" style="left:134.5px;top:96px;width:9.5px;height:0.5px;background:#aaa;"></div>
<div class="r" style="left:151.5px;top:93.3px;width:10.5px;height:0.5px;background:#999;"></div>
<div class="r" style="left:151.5px;top:96px;width:9.5px;height:0.5px;background:#aaa;"></div>
<div class="r" style="left:168.5px;top:93.3px;width:18.5px;height:0.5px;background:#999;"></div>
<div class="r" style="left:168.5px;top:96px;width:17.5px;height:0.5px;background:#aaa;"></div>
<div class="r" style="left:98.48px;top:91px;width:1.035px;height:123.8px;background:#2a2a2a;"></div>
<div class="r" style="left:200.48px;top:91px;width:1.035px;height:123.8px;background:#2a2a2a;"></div>
<div class="r" style="left:151.44px;top:99.3px;width:0.9199999999999999px;height:19.7px;background:#2a2a2a;"></div>
<div class="r" style="left:101px;top:101px;width:14px;height:0.5px;background:#999;"></div>
<div class="r" style="left:101px;top:102.5px;width:26px;height:0.5px;background:#aaa;"></div>
<div class="r" style="left:101px;top:106.5px;width:42px;height:0.5px;background:#aaa;"></div>
<div class="r" style="left:101px;top:117px;width:4px;height:0.5px;background:#aaa;"></div>
<div class="r" style="left:154px;top:101px;width:11px;height:0.5px;background:#999;"></div>
<div class="r" style="left:154px;top:102.5px;width:27px;height:0.5px;background:#aaa;"></div>
<div class="r" style="left:154px;top:106.5px;width:26px;height:0.5px;background:#aaa;"></div>
<div class="r" style="left:154px;top:117px;width:3px;height:0.5px;background:#aaa;"></div>
<div class="r" style="left:99px;top:118.48px;width:102px;height:1.035px;background:#2a2a2a;"></div>
<div class="r" style="left:117.74px;top:119px;width:0.9199999999999999px;height:11.3px;background:#2a2a2a;"></div>
<div class="r" style="left:138.54px;top:119px;width:0.9199999999999999px;height:11.3px;background:#2a2a2a;"></div>
<div class="r" style="left:145.84px;top:119px;width:0.9199999999999999px;height:11.3px;background:#2a2a2a;"></div>
<div class="r" style="left:158.44px;top:119px;width:0.9199999999999999px;height:11.3px;background:#2a2a2a;"></div>
<div class="r" style="left:165.94px;top:119px;width:0.9199999999999999px;height:11.3px;background:#2a2a2a;"></div>
<div class="r" style="left:179.94px;top:119px;width:0.9199999999999999px;height:11.3px;background:#2a2a2a;"></div>
<div class="r" style="left:185.94px;top:119px;width:0.9199999999999999px;height:11.3px;background:#2a2a2a;"></div>
<div class="r" style="left:186.4px;top:122.25px;width:14.6px;height:0.69px;background:#2a2a2a;"></div>
<div class="r" style="left:99px;top:125.24px;width:102px;height:0.9199999999999999px;background:#2a2a2a;"></div>
<div class="r" style="left:99px;top:129.78px;width:102px;height:1.035px;background:#2a2a2a;"></div>
<div class="r" style="left:101px;top:124px;width:14px;height:0.5px;background:#aaa;"></div>
<div class="r" style="left:101px;top:128px;width:14px;height:0.5px;background:#aaa;"></div>
<div class="r" style="left:145.84px;top:130.3px;width:0.9199999999999999px;height:5.9px;background:#2a2a2a;"></div>
<div class="r" style="left:158.5px;top:130.3px;width:0.8049999999999999px;height:3.0px;background:#2a2a2a;"></div>
<div class="r" style="left:180.0px;top:130.3px;width:0.8049999999999999px;height:3.0px;background:#2a2a2a;"></div>
<div class="r" style="left:146.3px;top:132.9px;width:54.7px;height:0.8049999999999999px;background:#2a2a2a;"></div>
<div class="r" style="left:101px;top:132px;width:19px;height:0.5px;background:#999;"></div>
<div class="r" style="left:101px;top:134px;width:26px;height:0.5px;background:#aaa;"></div>
<div class="r" style="left:99px;top:135.88px;width:102px;height:1.035px;background:#2a2a2a;"></div>
<div class="r" style="left:173.54px;top:136.4px;width:0.9199999999999999px;height:20.0px;background:#2a2a2a;"></div>
<div class="r" style="left:101px;top:138px;width:12px;height:0.5px;background:#aaa;"></div>
<div class="r" style="left:101px;top:140px;width:14px;height:0.5px;background:#aaa;"></div>
<div class="r" style="left:101px;top:142px;width:10px;height:0.5px;background:#aaa;"></div>
<div class="r" style="left:101px;top:144px;width:52px;height:0.5px;background:#aaa;"></div>
<div class="r" style="left:101px;top:146px;width:66px;height:0.5px;background:#aaa;"></div>
<div class="r" style="left:101px;top:148px;width:32px;height:0.5px;background:#aaa;"></div>
<div class="r" style="left:101px;top:150px;width:56px;height:0.5px;background:#aaa;"></div>
<div class="r" style="left:101px;top:152px;width:48px;height:0.5px;background:#aaa;"></div>
<div class="r" style="left:101px;top:154px;width:46px;height:0.5px;background:#aaa;"></div>
<div class="r" style="left:176px;top:138px;width:9px;height:0.5px;background:#aaa;"></div>
<div class="r" style="left:191px;top:138px;width:7px;height:0.5px;background:#bbb;"></div>
<div class="r" style="left:176px;top:140px;width:9px;height:0.5px;background:#aaa;"></div>
<div class="r" style="left:191px;top:140px;width:7px;height:0.5px;background:#bbb;"></div>
<div class="r" style="left:176px;top:142px;width:9px;height:0.5px;background:#aaa;"></div>
<div class="r" style="left:191px;top:142px;width:7px;height:0.5px;background:#bbb;"></div>
<div class="r" style="left:176px;top:144px;width:9px;height:0.5px;background:#aaa;"></div>
<div class="r" style="left:191px;top:144px;width:7px;height:0.5px;background:#bbb;"></div>
<div class="r" style="left:176px;top:146px;width:9px;height:0.5px;background:#aaa;"></div>
<div class="r" style="left:191px;top:146px;width:7px;height:0.5px;background:#bbb;"></div>
<div class="r" style="left:99px;top:156.4px;width:102px;height:2.8px;background:#e0e0e0;"></div>
<div class="r" style="left:99px;top:155.88px;width:102px;height:1.035px;background:#2a2a2a;"></div>
<div class="r" style="left:99px;top:158.68px;width:102px;height:1.035px;background:#2a2a2a;"></div>
<div class="r" style="left:101px;top:157.6px;width:11px;height:0.5px;background:#888;"></div>
<div class="r" style="left:101px;top:161.4px;width:4px;height:0.5px;background:#999;"></div>
<div class="r" style="left:117px;top:161.4px;width:11px;height:0.5px;background:#aaa;"></div>
<div class="r" style="left:150px;top:161.4px;width:6px;height:0.5px;background:#999;"></div>
<div class="r" style="left:167px;top:161.4px;width:12px;height:0.5px;background:#aaa;"></div>
<div class="r" style="left:101px;top:163.4px;width:4px;height:0.5px;background:#999;"></div>
<div class="r" style="left:117px;top:163.4px;width:11px;height:0.5px;background:#aaa;"></div>
<div class="r" style="left:150px;top:163.4px;width:6px;height:0.5px;background:#999;"></div>
<div class="r" style="left:167px;top:163.4px;width:12px;height:0.5px;background:#aaa;"></div>
<div class="r" style="left:101px;top:165.4px;width:4px;height:0.5px;background:#999;"></div>
<div class="r" style="left:117px;top:165.4px;width:11px;height:0.5px;background:#aaa;"></div>
<div class="r" style="left:150px;top:165.4px;width:6px;height:0.5px;background:#999;"></div>
<div class="r" style="left:167px;top:165.4px;width:12px;height:0.5px;background:#aaa;"></div>
<div class="r" style="left:99px;top:167.34px;width:102px;height:0.9199999999999999px;background:#2a2a2a;"></div>
<div class="r" style="left:99px;top:168.48px;width:102px;height:1.035px;background:#2a2a2a;"></div>
<div class="r" style="left:99.5px;top:169.7px;width:101px;height:3.3px;background:#c8c8c8;"></div>
<div class="r" style="left:101px;top:171px;width:17px;height:0.6px;background:#777;"></div>
<div class="r" style="left:99px;top:172.8px;width:102px;height:0.8049999999999999px;background:#2a2a2a;"></div>
<div class="r" style="left:101px;top:175px;width:4px;height:0.5px;background:#999;"></div>
<div class="r" style="left:177px;top:175px;width:14px;height:0.5px;background:#999;"></div>
<div class="r" style="left:177px;top:177px;width:5px;height:0.5px;background:#999;"></div>
<div class="r" style="left:99.5px;top:179.7px;width:101px;height:4.7px;background:#c8c8c8;"></div>
<div class="r" style="left:99px;top:178.98px;width:102px;height:1.035px;background:#2a2a2a;"></div>
<div class="r" style="left:99px;top:183.88px;width:102px;height:1.035px;background:#2a2a2a;"></div>
<div class="r" style="left:99px;top:198.53px;width:102px;height:1.15px;background:#2a2a2a;"></div>
<div class="r" style="left:99px;top:205.78px;width:102px;height:1.035px;background:#2a2a2a;"></div>
<div class="r" style="left:99px;top:214.23px;width:102px;height:1.15px;background:#2a2a2a;"></div>
<div class="r" style="left:101px;top:208.5px;width:6px;height:0.5px;background:#999;"></div>
<div class="r" style="left:131px;top:208.5px;width:7px;height:0.5px;background:#aaa;"></div>
<div class="r" style="left:160px;top:208.5px;width:13px;height:0.5px;background:#aaa;"></div>
<div class="r" style="left:101px;top:211.3px;width:6px;height:0.5px;background:#999;"></div>
<div class="r" style="left:131px;top:211.3px;width:7px;height:0.5px;background:#aaa;"></div>
<div class="r" style="left:160px;top:211.3px;width:13px;height:0.5px;background:#aaa;"></div>
<div class="r" style="left:99px;top:216px;width:19.5px;height:0.6px;background:#666;"></div>
<div class="r" style="left:123px;top:216px;width:16.4px;height:0.5px;background:#aaa;"></div>
</div>
<div class="r" style="left:1633px;top:0px;width:1px;height:895px;background:#f0ffff;"></div>
<div class="r" style="left:1634px;top:0px;width:3px;height:895px;background:#ff0000;"></div>
</body></html>
